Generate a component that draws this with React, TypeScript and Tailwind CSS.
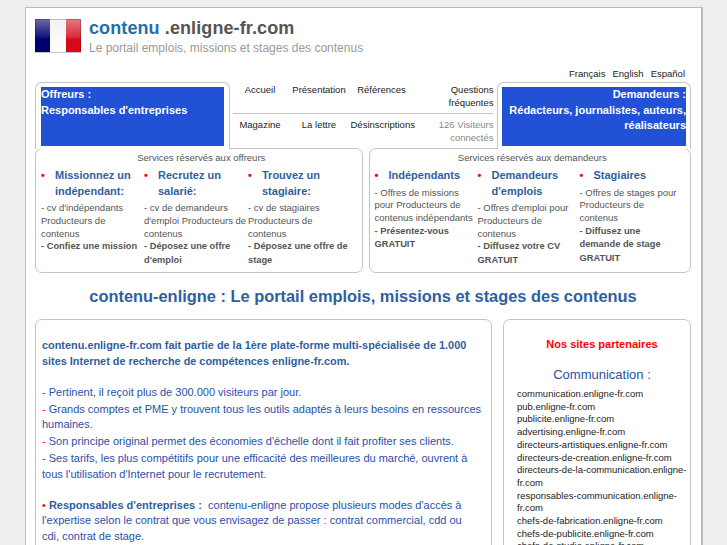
const blue = "text-[#2f5f9e]";

function Bullet() {
  return <span className="absolute left-0 top-0 text-[#ff0000]">•</span>;
}

type Column = {
  title: string;
  lines: string[];
  strong: string[];
  width: string;
};

const offreurs: Column[] = [
  {
    title: "Missionnez un indépendant:",
    lines: ["- cv d'indépendants Producteurs de contenus"],
    strong: ["- Confiez une mission"],
    width: "w-[103px]",
  },
  {
    title: "Recrutez un salarié:",
    lines: ["- cv de demandeurs d'emploi Producteurs de contenus"],
    strong: ["- Déposez une offre d'emploi"],
    width: "w-[104px]",
  },
  {
    title: "Trouvez un stagiaire:",
    lines: ["- cv de stagiaires Producteurs de contenus"],
    strong: ["- Déposez une offre de stage"],
    width: "w-[104px]",
  },
];

const demandeurs: Column[] = [
  {
    title: "Indépendants",
    lines: ["- Offres de missions pour Producteurs de contenus indépendants"],
    strong: ["- Présentez-vous", "GRATUIT"],
    width: "w-[103px]",
  },
  {
    title: "Demandeurs d'emplois",
    lines: ["- Offres d'emploi pour Producteurs de contenus"],
    strong: ["- Diffusez votre CV", "GRATUIT"],
    width: "w-[102px]",
  },
  {
    title: "Stagiaires",
    lines: ["- Offres de stages pour Producteurs de contenus"],
    strong: ["- Diffusez une demande de stage", "GRATUIT"],
    width: "w-[104px]",
  },
];

const partners = [
  "communication.enligne-fr.com",
  "pub.enligne-fr.com",
  "publicite.enligne-fr.com",
  "advertising.enligne-fr.com",
  "directeurs-artistiques.enligne-fr.com",
  "directeurs-de-creation.enligne-fr.com",
  "directeurs-de-la-communication.enligne-fr.com",
  "responsables-communication.enligne-fr.com",
  "chefs-de-fabrication.enligne-fr.com",
  "chefs-de-publicite.enligne-fr.com",
  "chefs-de-studio.enligne-fr.com",
];

function ServiceColumns({ columns }: { columns: Column[] }) {
  return (
    <div className="flex">
      {columns.map((col) => (
        <div key={col.title} className={col.width}>
          <div className={`relative pl-[14px] text-[11px] font-bold leading-[15.5px] ${blue}`}>
            <Bullet />
            {col.title}
          </div>
          <div className="mt-[3px] text-[9.5px] leading-[12.8px] text-[#555555]">
            {col.lines.map((line) => (
              <div key={line}>{line}</div>
            ))}
            {col.strong.map((line) => (
              <div key={line} className="text-[9.3px] font-bold leading-[13.4px] text-[#555555]">
                {line}
              </div>
            ))}
          </div>
        </div>
      ))}
    </div>
  );
}

function FlagIcon() {
  return (
    <svg width="46" height="34" viewBox="0 0 46 34" className="mt-px shrink-0">
      <defs>
        <linearGradient id="flagBlue" x1="0" y1="0" x2="0" y2="1">
          <stop offset="0" stopColor="#6a6aa6" />
          <stop offset="0.55" stopColor="#12127c" />
          <stop offset="0.62" stopColor="#00006e" />
        </linearGradient>
        <linearGradient id="flagWhite" x1="0" y1="0" x2="0" y2="1">
          <stop offset="0" stopColor="#f2f2f2" />
          <stop offset="1" stopColor="#ffffff" />
        </linearGradient>
        <linearGradient id="flagRed" x1="0" y1="0" x2="0" y2="1">
          <stop offset="0" stopColor="#e87a84" />
          <stop offset="0.55" stopColor="#dc2a3a" />
          <stop offset="0.62" stopColor="#d8081c" />
        </linearGradient>
      </defs>
      <rect x="0" y="0" width="15" height="33" fill="url(#flagBlue)" />
      <rect x="15" y="0" width="16" height="33" fill="url(#flagWhite)" />
      <rect x="31" y="0" width="15" height="33" fill="url(#flagRed)" />
      <rect x="0.5" y="0.5" width="45" height="33" fill="none" stroke="#000000" strokeOpacity="0.22" />
    </svg>
  );
}

export default function App() {
  return (
    <div className="h-[545px] overflow-hidden bg-[#eeeeee] pl-[25px] pt-[7px] font-['Liberation_Sans',Arial,sans-serif]">
      <div className="h-[600px] w-[678px] border border-r-2 border-[#bbbbbb] bg-white pl-[9px] pr-[10px]">
        <header className="flex h-[58px] items-start gap-[8px] pt-[10px]">
          <FlagIcon />
          <div>
            <div className="text-[18px] font-bold leading-[20px] tracking-[0.1px] text-[#555555]">
              <span className="text-[#1f70a8]">contenu</span> .enligne-fr.com
            </div>
            <div className="mt-[3px] text-[12px] leading-[14px] text-[#999999]">
              Le portail emplois, missions et stages des contenus
            </div>
          </div>
        </header>

        <div className="flex h-[16px] items-center justify-end gap-[7px] pr-[6px] text-[9.5px] text-[#222222]">
          <span>Français</span>
          <span>English</span>
          <span>Español</span>
        </div>

        <div className="relative z-10 flex h-[67px]">
          <div className="h-[67px] w-[195px] rounded-t-[7px] border border-b-0 border-[#c4c4c4] bg-white px-[5px] pt-[4px]">
            <div className="h-[59px] bg-[#2152d6] text-[11px] font-bold leading-[15.5px] text-white">
              <div>Offreurs :</div>
              <div>Responsables d'entreprises</div>
            </div>
          </div>
          <nav className="ml-[3px] w-[261px] text-[9.5px] leading-[13px] text-[#222222]">
            <div className="grid h-[32px] grid-cols-[55px_63px_62px_81px] border-b border-[#c4c4c4] pt-[1px] text-center">
              <span>Accueil</span>
              <span>Présentation</span>
              <span>Références</span>
              <span className="text-right">Questions fréquentes</span>
            </div>
            <div className="grid grid-cols-[55px_63px_62px_81px] pt-[1px] text-center">
              <span className="pt-[3px]">Magazine</span>
              <span className="pt-[3px]">La lettre</span>
              <span className="pt-[3px]">Désinscriptions</span>
              <span className="pl-[11px] pt-[3px] text-right text-[#888888]">126 Visiteurs connectés</span>
            </div>
          </nav>
          <div className="ml-[3px] h-[67px] w-[195px] rounded-t-[7px] border border-b-0 border-[#c4c4c4] bg-white px-[4px] pt-[4px]">
            <div className="h-[59px] bg-[#2152d6] text-right text-[11px] font-bold leading-[15.5px] text-white">
              <div>Demandeurs :</div>
              <div>Rédacteurs, journalistes, auteurs, réalisateurs</div>
            </div>
          </div>
        </div>

        <div className="-mt-px flex gap-[6px]">
          <section className="h-[125px] w-[328px] rounded-[7px] border border-[#c4c4c4] pl-[5px] pt-[2px]">
            <div className="text-center text-[9.5px] leading-[13px] text-[#555555]">Services réservés aux offreurs</div>
            <div className="mt-[4px]">
              <ServiceColumns columns={offreurs} />
            </div>
          </section>
          <section className="h-[125px] w-[323px] rounded-[7px] border border-[#c4c4c4] pl-[5px] pt-[2px]">
            <div className="text-center text-[9.5px] leading-[13px] text-[#555555]">Services réservés aux demandeurs</div>
            <div className="mt-[4px]">
              <ServiceColumns columns={demandeurs} />
            </div>
          </section>
        </div>

        <h1 className={`mt-[13px] text-center text-[16.4px] font-bold leading-[20px] ${blue}`}>
          contenu-enligne : Le portail emplois, missions et stages des contenus
        </h1>

        <div className="mt-[13px] flex gap-[11px]">
          <section className="h-[300px] w-[457px] rounded-[7px] border border-[#c4c4c4] pl-[6px] pr-[7px] pt-[18px] text-[11px] leading-[15.5px] text-[#2a50a8]">
            <p className={`text-[10.9px] font-bold ${blue}`}>
              contenu.enligne-fr.com fait partie de la 1ère plate-forme multi-spécialisée de 1.000 sites Internet de recherche de compétences enligne-fr.com.
            </p>
            <p className="mt-[15.5px]"><span className="text-[#ff0000]">-</span> Pertinent, il reçoit plus de 300.000 visiteurs par jour.</p>
            <p className="mt-[1.5px]"><span className="text-[#ff0000]">-</span> Grands comptes et PME y trouvent tous les outils adaptés à leurs besoins en ressources humaines.</p>
            <p className="mt-[1.5px]"><span className="text-[#ff0000]">-</span> Son principe original permet des économies d'échelle dont il fait profiter ses clients.</p>
            <p className="mt-[1.5px]"><span className="text-[#ff0000]">-</span> Ses tarifs, les plus compétitifs pour une efficacité des meilleures du marché, ouvrent à tous l'utilisation d'Internet pour le recrutement.</p>
            <p className="mt-[15.5px]">
              <span className="text-[#ff0000]">•</span> <b className={blue}>Responsables d'entreprises :</b>&nbsp; contenu-enligne propose plusieurs modes d'accès à l'expertise selon le contrat que vous envisagez de passer : contrat commercial, cdd ou<br />cdi, contrat de stage.
            </p>
          </section>
          <aside className="h-[300px] w-[188px] rounded-[7px] border border-[#c4c4c4] pl-[13px] pr-[3px] pt-[16px]">
            <div className="text-center text-[11px] font-bold leading-[16px] text-[#ff0000]">Nos sites partenaires</div>
            <div className="mt-[15px] text-center text-[13px] leading-[16px] text-[#2a50a8]">Communication :</div>
            <ul className="mt-[5px] text-[9.5px] leading-[12.7px] text-[#222222]">
              {partners.map((site) => (
                <li key={site}>{site}</li>
              ))}
            </ul>
          </aside>
        </div>
      </div>
    </div>
  );
}
